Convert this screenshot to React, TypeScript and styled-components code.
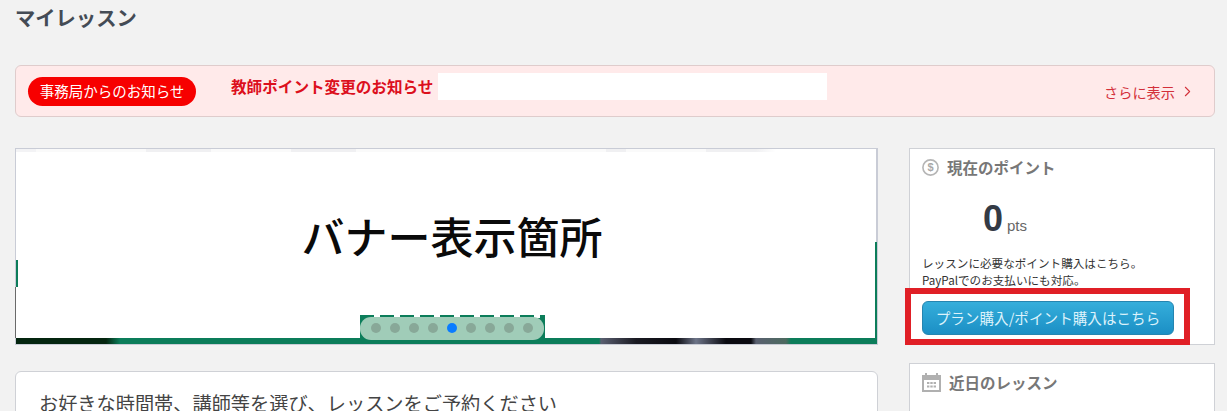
import styled, { createGlobalStyle } from "styled-components";
import { ChevronRight } from "lucide-react";

const GlobalStyle = createGlobalStyle`
  html, body {
    margin: 0;
    padding: 0;
    height: 411px;
    overflow: hidden;
    background: #f2f2f2;
    font-family: "Noto Sans CJK JP", "Liberation Sans", sans-serif;
  }
`;

const Page = styled.div`
  box-sizing: border-box;
  height: 411px;
  overflow: hidden;
  padding: 3px 12px 0 15px;
`;

const Title = styled.h1`
  margin: 0;
  height: 28px;
  font-size: 20.3px;
  line-height: 28px;
  font-weight: 700;
  color: #444b55;
`;

const Notice = styled.div`
  box-sizing: border-box;
  display: flex;
  align-items: center;
  height: 52px;
  margin-top: 34px;
  padding: 0 18px 0 12px;
  background: #ffeaea;
  border: 1px solid #dfcccc;
  border-radius: 6px;
`;

const Badge = styled.span`
  flex: none;
  width: 168px;
  height: 29px;
  margin-top: 1px;
  border-radius: 15px;
  background: #f70000;
  color: #fff;
  font-size: 14.5px;
  line-height: 28px;
  text-align: center;
`;

const NoticeTitle = styled.strong`
  flex: none;
  width: 207px;
  margin: -11px 0 0 35px;
  color: #dc0f1c;
  font-size: 15.6px;
  line-height: 24px;
  font-weight: 700;
  white-space: nowrap;
`;

const Masked = styled.span`
  flex: none;
  width: 389px;
  height: 27px;
  margin-top: -9px;
  background: #fff;
`;

const MoreLink = styled.a`
  display: flex;
  align-items: center;
  gap: 4px;
  margin: 1px 0 0 auto;
  color: #d3303a;
  font-size: 14.2px;
  line-height: 20px;
`;

const Columns = styled.div`
  display: grid;
  grid-template-columns: 863px 306px;
  column-gap: 31px;
  margin-top: 31px;
`;

const MainColumn = styled.div`
  display: flex;
  flex-direction: column;
  gap: 26px;
`;

const Banner = styled.div`
  box-sizing: border-box;
  position: relative;
  display: flex;
  align-items: center;
  justify-content: center;
  height: 197px;
  padding: 0 0 23px 12px;
  background: #fff;
  border-top: 1px solid #c9ccd6;
  border-left: 1px solid #c9ccd6;
  border-right: 2px solid #c9ccd6;
  border-bottom: 1px solid #c9ccd6;
`;

const BannerText = styled.div`
  font-size: 43px;
  line-height: 60px;
  font-weight: 500;
  color: #0a0a0a;
  white-space: nowrap;
`;

// top edge of the banner image, almost washed out
const BannerFade = styled.div`
  position: absolute;
  left: 0;
  right: 0;
  top: 0;
  height: 3px;
  background: linear-gradient(
    90deg,
    #f3f3f5 0,
    #f3f3f5 20px,
    #fafafa 20px,
    #fafafa 130px,
    #f0f0f2 130px,
    #f0f0f2 195px,
    #fafafa 195px,
    #fafafa 275px,
    #f0f0f2 275px,
    #f0f0f2 340px,
    #fafafa 340px,
    #fafafa 590px,
    #f0f0f2 590px,
    #f0f0f2 610px,
    #fafafa 610px,
    #fafafa 690px,
    #f0f0f2 690px,
    #f0f0f2 740px,
    #fff 760px
  );
`;

// bottom edge of the banner image peeking out under the white placeholder
const BannerStrip = styled.div`
  position: absolute;
  left: 0;
  right: 0;
  bottom: 0;
  height: 6px;
  background: linear-gradient(
    90deg,
    #04250f 0,
    #04250f 90px,
    #0c7d5a 104px,
    #0c7d5a 583px,
    #5a5f70 585px,
    #1a1a22 620px,
    #0a0a10 660px,
    #6d7488 680px,
    #0a0a10 710px,
    #0a0a10 735px,
    #5a6070 740px,
    #4d6a60 770px,
    #0c7d5a 775px
  );
`;

const BannerEdgeRight = styled.div`
  position: absolute;
  top: 93px;
  right: -1px;
  bottom: 0;
  width: 2px;
  background: #0c7d5a;
`;

const BannerEdgeLeft = styled.div`
  position: absolute;
  top: 111px;
  left: 0;
  width: 2px;
  height: 27px;
  background: #0c7d5a;
`;

const BannerEdgeLeftDark = styled.div`
  position: absolute;
  top: 138px;
  left: -1px;
  bottom: 6px;
  width: 1px;
  background: #6a6a6a;
`;

const DotsBackdrop = styled.div`
  position: absolute;
  left: 344px;
  bottom: 3px;
  width: 185px;
  height: 26px;
  background:
    repeating-linear-gradient(90deg, #0c7d5a 0 14px, #fff 14px 20px) top / 100% 3px no-repeat,
    #0c7d5a;
`;

const Dots = styled.div`
  position: absolute;
  left: 344px;
  bottom: 4px;
  box-sizing: border-box;
  display: flex;
  align-items: center;
  gap: 9px;
  width: 184px;
  height: 23px;
  padding: 0 10px 2px 11px;
  background: #a0ccb8;
  border-radius: 11px;
`;

const Dot = styled.span<{ $active?: boolean }>`
  flex: none;
  width: 10px;
  height: 10px;
  border-radius: 50%;
  background: ${(p) => (p.$active ? "#0a7cff" : "#88a898")};
`;

const Card = styled.div`
  box-sizing: border-box;
  height: 120px;
  padding: 16px 23px;
  background: #fff;
  border: 1px solid #cfd1d6;
  border-radius: 6px;
  color: #444;
  font-size: 19.2px;
  line-height: 30px;
  white-space: nowrap;
`;

const SideColumn = styled.aside`
  position: relative;
  display: flex;
  flex-direction: column;
  gap: 18px;
`;

const SideCard = styled.section<{ $height: number }>`
  box-sizing: border-box;
  height: ${(p) => p.$height}px;
  padding: 6px 12px 0;
  background: #fff;
  border: 1px solid #cfd1d6;
`;

const SideHeading = styled.h2`
  display: flex;
  align-items: center;
  gap: 8px;
  margin: 0;
  height: 24px;
  color: #777;
  font-size: 15.5px;
  line-height: 24px;
  font-weight: 700;
`;

const Points = styled.div`
  display: flex;
  align-items: baseline;
  gap: 4px;
  height: 48px;
  margin: 16px 0 0 61px;
`;

const PointsValue = styled.span`
  font-family: "Liberation Sans", sans-serif;
  font-size: 36px;
  line-height: 48px;
  font-weight: 700;
  color: #333a45;
`;

const PointsUnit = styled.span`
  font-family: "Liberation Sans", sans-serif;
  font-size: 15px;
  color: #666;
`;

const PointsNote = styled.p`
  margin: 12px 0 0;
  font-size: 11.6px;
  line-height: 17px;
  color: #333;
  white-space: nowrap;
`;

const BuyButton = styled.button`
  display: block;
  box-sizing: border-box;
  width: 252px;
  height: 34px;
  margin-top: 12px;
  padding: 0;
  border: 1px solid #2585b0;
  border-radius: 6px;
  background: linear-gradient(#35aedb, #1b8fc5);
  color: #dcf2fb;
  font-family: inherit;
  font-size: 14.6px;
  line-height: 30px;
  white-space: nowrap;
`;

const Highlight = styled.div`
  box-sizing: border-box;
  position: absolute;
  left: -4px;
  top: 140px;
  width: 285px;
  height: 57px;
  border: 6px solid #e01f26;
  pointer-events: none;
`;

const App = () => {
  const dots = [0, 1, 2, 3, 4, 5, 6, 7, 8];

  return (
    <Page>
      <GlobalStyle />
      <Title>マイレッスン</Title>

      <Notice>
        <Badge>事務局からのお知らせ</Badge>
        <NoticeTitle>教師ポイント変更のお知らせ</NoticeTitle>
        <Masked />
        <MoreLink>
          さらに表示
          <ChevronRight size={17} strokeWidth={1.5} />
        </MoreLink>
      </Notice>

      <Columns>
        <MainColumn>
          <Banner>
            <BannerFade />
            <BannerStrip />
            <BannerEdgeRight />
            <BannerEdgeLeft />
            <BannerEdgeLeftDark />
            <BannerText>バナー表示箇所</BannerText>
            <DotsBackdrop />
            <Dots>
              {dots.map((d) => (
                <Dot key={d} $active={d === 4} />
              ))}
            </Dots>
          </Banner>
          <Card>お好きな時間帯、講師等を選び、レッスンをご予約ください</Card>
        </MainColumn>

        <SideColumn>
          <SideCard $height={197}>
            <SideHeading>
              <svg width="17" height="17" viewBox="0 0 17 17" fill="none">
                <circle cx="8.5" cy="8.5" r="7.6" stroke="#b5b5b5" strokeWidth="1.6" />
                <text x="8.5" y="12.4" fontSize="11" fontFamily="Liberation Sans" fill="#a8a8a8" textAnchor="middle">
                  $
                </text>
              </svg>
              現在のポイント
            </SideHeading>
            <Points>
              <PointsValue>0</PointsValue>
              <PointsUnit>pts</PointsUnit>
            </Points>
            <PointsNote>
              レッスンに必要なポイント購入はこちら。
              <br />
              PayPalでのお支払いにも対応。
            </PointsNote>
            <BuyButton>プラン購入/ポイント購入はこちら</BuyButton>
          </SideCard>

          <SideCard $height={120}>
            <SideHeading>
              <svg width="19" height="19" viewBox="0 0 19 19" fill="#b0b0b0">
                <path d="M0 2h3V0h2v2h9V0h2v2h3v17H0V2zm2 5v10h15V7H2z" />
                <path d="M5 9h2.4v2H5zM8.3 9h2.4v2H8.3zM11.6 9H14v2h-2.4zM5 12.5h2.4v2H5zM8.3 12.5h2.4v2H8.3zM11.6 12.5H14v2h-2.4z" />
              </svg>
              近日のレッスン
            </SideHeading>
          </SideCard>

          <Highlight />
        </SideColumn>
      </Columns>
    </Page>
  );
};

export default App;
